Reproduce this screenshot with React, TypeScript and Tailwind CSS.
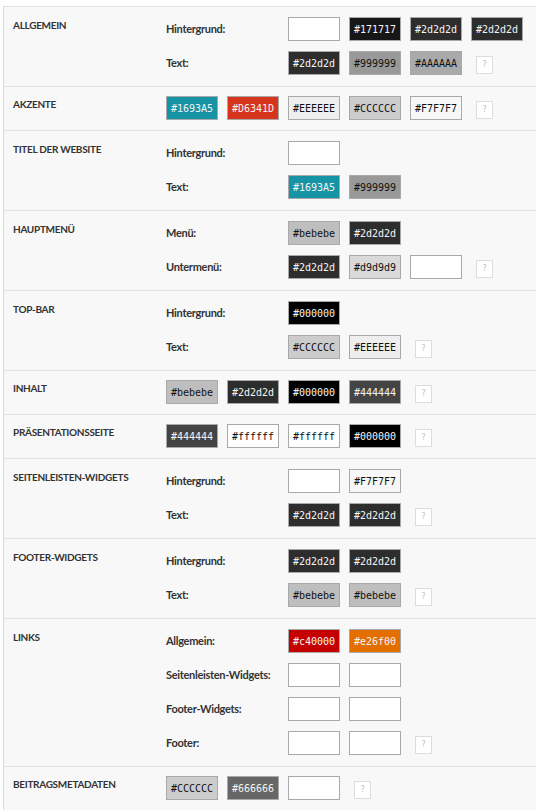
type Swatch = { hex?: string; bg: string; dark?: boolean };

type Row = { label: string; swatches: Swatch[]; help?: boolean };

type Section = { title: string; rows?: Row[]; swatches?: Swatch[]; help?: boolean };

const empty: Swatch = { bg: "bg-white" };
const d2 = { hex: "#2d2d2d", bg: "bg-[#2d2d2d]", dark: true };
const bebebe = { hex: "#bebebe", bg: "bg-[#bebebe]" };

const sections: Section[] = [
  {
    title: "ALLGEMEIN",
    rows: [
      {
        label: "Hintergrund:",
        swatches: [empty, { hex: "#171717", bg: "bg-[#171717]", dark: true }, d2, d2],
      },
      {
        label: "Text:",
        swatches: [d2, { hex: "#999999", bg: "bg-[#999999]" }, { hex: "#AAAAAA", bg: "bg-[#aaaaaa]" }],
        help: true,
      },
    ],
  },
  {
    title: "AKZENTE",
    swatches: [
      { hex: "#1693A5", bg: "bg-[#1693a5]", dark: true },
      { hex: "#D6341D", bg: "bg-[#d6341d]", dark: true },
      { hex: "#EEEEEE", bg: "bg-[#eeeeee]" },
      { hex: "#CCCCCC", bg: "bg-[#cccccc]" },
      { hex: "#F7F7F7", bg: "bg-[#f7f7f7]" },
    ],
    help: true,
  },
  {
    title: "TITEL DER WEBSITE",
    rows: [
      { label: "Hintergrund:", swatches: [empty] },
      {
        label: "Text:",
        swatches: [
          { hex: "#1693A5", bg: "bg-[#1693a5]", dark: true },
          { hex: "#999999", bg: "bg-[#999999]" },
        ],
      },
    ],
  },
  {
    title: "HAUPTMENÜ",
    rows: [
      { label: "Menü:", swatches: [bebebe, d2] },
      { label: "Untermenü:", swatches: [d2, { hex: "#d9d9d9", bg: "bg-[#d9d9d9]" }, empty], help: true },
    ],
  },
  {
    title: "TOP-BAR",
    rows: [
      { label: "Hintergrund:", swatches: [{ hex: "#000000", bg: "bg-black", dark: true }] },
      {
        label: "Text:",
        swatches: [
          { hex: "#CCCCCC", bg: "bg-[#cccccc]" },
          { hex: "#EEEEEE", bg: "bg-[#eeeeee]" },
        ],
        help: true,
      },
    ],
  },
  {
    title: "INHALT",
    swatches: [
      bebebe,
      d2,
      { hex: "#000000", bg: "bg-black", dark: true },
      { hex: "#444444", bg: "bg-[#444444]", dark: true },
    ],
    help: true,
  },
  {
    title: "PRÄSENTATIONSSEITE",
    swatches: [
      { hex: "#444444", bg: "bg-[#444444]", dark: true },
      { hex: "#ffffff", bg: "bg-white" },
      { hex: "#ffffff", bg: "bg-white" },
      { hex: "#000000", bg: "bg-black", dark: true },
    ],
    help: true,
  },
  {
    title: "SEITENLEISTEN-WIDGETS",
    rows: [
      { label: "Hintergrund:", swatches: [empty, { hex: "#F7F7F7", bg: "bg-[#f7f7f7]" }] },
      { label: "Text:", swatches: [d2, d2], help: true },
    ],
  },
  {
    title: "FOOTER-WIDGETS",
    rows: [
      { label: "Hintergrund:", swatches: [d2, d2] },
      { label: "Text:", swatches: [bebebe, bebebe], help: true },
    ],
  },
  {
    title: "LINKS",
    rows: [
      {
        label: "Allgemein:",
        swatches: [
          { hex: "#c40000", bg: "bg-[#c40000]", dark: true },
          { hex: "#e26f00", bg: "bg-[#e26f00]", dark: true },
        ],
      },
      { label: "Seitenleisten-Widgets:", swatches: [empty, empty] },
      { label: "Footer-Widgets:", swatches: [empty, empty] },
      { label: "Footer:", swatches: [empty, empty], help: true },
    ],
  },
  {
    title: "BEITRAGSMETADATEN",
    swatches: [
      { hex: "#CCCCCC", bg: "bg-[#cccccc]" },
      { hex: "#666666", bg: "bg-[#666666]", dark: true },
      empty,
    ],
    help: true,
  },
];

function ColorBox({ s }: { s: Swatch }) {
  return (
    <div
      className={`flex h-[24px] w-[52px] shrink-0 items-center justify-center border border-[#a9a9a9] font-['DejaVu_Sans_Mono',monospace] text-[10px] ${s.bg} ${
        s.dark ? "text-[#f4f4f4]" : "text-[#111111]"
      }`}
    >
      {s.hex}
    </div>
  );
}

function Help() {
  return (
    <div className="ml-[5px] mt-[4px] flex h-[18px] w-[17px] items-center justify-center border border-[#dddddd] bg-white font-['DejaVu_Sans',sans-serif] text-[8px] text-[#c0c0c0]">
      ?
    </div>
  );
}

function Swatches({ list, help }: { list: Swatch[]; help?: boolean }) {
  return (
    <div className="flex items-center gap-[9px]">
      {list.map((s, i) => (
        <ColorBox key={i} s={s} />
      ))}
      {help && <Help />}
    </div>
  );
}

export default function App() {
  return (
    <div className="min-h-screen bg-white pl-[3px] pt-[6px] font-['Lato',sans-serif] text-[#333333]">
      <div className="border-l border-[#dcdcdc] bg-[#f8f8f8]">
        {sections.map((sec) => {
          const multi = !!sec.rows;
          return (
            <div
              key={sec.title}
              className={`flex border-t border-[#e3e3e3] pl-[9px] ${multi ? "pb-[11px] pt-[10px]" : "pb-[10px] pt-[9px]"}`}
            >
              <div className="mt-[1px] w-[153px] shrink-0 text-[10px] font-bold leading-[14px] tracking-[-0.3px]">
                {sec.title}
              </div>
              {sec.rows ? (
                <div className="flex flex-col gap-[10px]">
                  {sec.rows.map((r) => (
                    <div key={r.label} className="flex items-center">
                      <div className="w-[122px] shrink-0 text-[11px] font-bold tracking-[-0.3px]">{r.label}</div>
                      <Swatches list={r.swatches} help={r.help} />
                    </div>
                  ))}
                </div>
              ) : (
                <Swatches list={sec.swatches ?? []} help={sec.help} />
              )}
            </div>
          );
        })}
      </div>
    </div>
  );
}
